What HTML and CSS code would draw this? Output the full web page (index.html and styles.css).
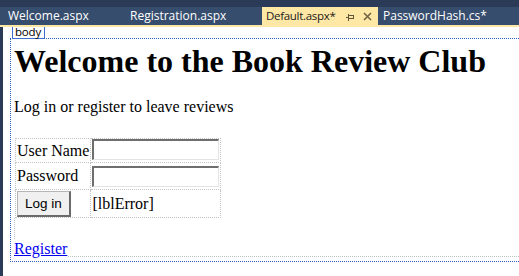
FILE: index.html
```html
<!DOCTYPE html>
<html>
<head>
<meta charset="utf-8">
<link rel="stylesheet" href="styles.css">
</head>
<body>
<div class="tabs">
  <div class="tab-band"></div>
  <div class="tab-row">
    <div class="tab tab-1">Welcome.aspx</div>
    <div class="tab tab-2">Registration.aspx</div>
    <div class="tab tab-active">
      <span class="tab-title">Default.aspx*</span>
      <svg class="pin" width="9" height="8" viewBox="0 0 9 8" shape-rendering="crispEdges">
        <rect x="0" y="4" width="2" height="1" fill="#5e5536"/>
        <rect x="2" y="1" width="1" height="7" fill="#5e5536"/>
        <rect x="3" y="2" width="5" height="1" fill="#5e5536"/>
        <rect x="3" y="5" width="5" height="1" fill="#5e5536"/>
        <rect x="7" y="2" width="1" height="4" fill="#5e5536"/>
      </svg>
      <svg class="close" width="9" height="9" viewBox="0 0 9 9">
        <path d="M1 1 L8 8 M8 1 L1 8" stroke="#6f6546" stroke-width="1.6" fill="none"/>
      </svg>
    </div>
    <div class="tab tab-4">PasswordHash.cs*</div>
  </div>
  <div class="tab-line"></div>
</div>
<div class="editor">
  <div class="gutter"></div>
  <div class="canvas">
    <div class="surface">
      <span class="tag">body</span>
      <h1 class="title">Welcome to the Book Review Club</h1>
      <p class="intro">Log in or register to leave reviews</p>
      <table class="login">
        <tr class="row-1">
          <td class="label">User Name</td>
          <td class="field"><span class="textbox"></span></td>
        </tr>
        <tr class="row-2">
          <td class="label">Password</td>
          <td class="field"><span class="textbox"></span></td>
        </tr>
        <tr class="row-3">
          <td class="label"><button class="btn" type="button">Log in</button></td>
          <td class="field msg">[lblError]</td>
        </tr>
      </table>
      <div class="reg-block"><a class="reg-link" href="#">Register</a></div>
    </div>
  </div>
</div>
</body>
</html>
```

FILE: styles.css
```css
html, body {
  margin: 0;
  padding: 0;
  background: #ffffff;
  overflow: hidden;
}
body {
  width: 519px;
  height: 276px;
  display: flex;
  flex-direction: column;
  font-family: "Liberation Serif", "Times New Roman", serif;
}
.tabs {
  display: flex;
  flex-direction: column;
  flex: none;
}
.tab-band {
  height: 7px;
  background: #2b3a57;
}
.tab-row {
  height: 18px;
  display: flex;
  background: #364d6e;
  font-family: "Open Sans", "Noto Sans", sans-serif;
  font-size: 12px;
  line-height: 18px;
  color: #ffffff;
  white-space: nowrap;
}
.tab {
  flex: none;
  box-sizing: border-box;
  overflow: hidden;
}
.tab-1 { width: 122px; padding-left: 8px; }
.tab-2 { width: 140px; padding-left: 8px; }
.tab-active {
  width: 116px;
  padding-left: 4px;
  background: #ffe8a6;
  color: #1a1a1a;
  display: flex;
  align-items: center;
}
.tab-title { width: 79px; flex: none; font-size: 11.5px; letter-spacing: -0.3px; }
.pin { flex: none; margin-top: 1px; margin-left: 1px; }
.close { flex: none; margin-left: 8px; margin-top: 0; }
.tab-4 { flex: 1; padding-left: 5px; }
.tab-line {
  height: 2px;
  background: #ffe8a6;
}
.editor {
  flex: 1;
  display: flex;
}
.gutter {
  width: 3px;
  flex: none;
  background: #2b3a57;
}
.canvas {
  flex: 1;
  background: #ffffff;
  padding-top: 11px;
  padding-left: 7px;
}
.surface {
  position: relative;
  border-top: 1px dotted #2f5fbf;
  border-left: 1px dotted #2f5fbf;
  border-bottom: 1px dotted #2f5fbf;
  padding: 0 0 4px 3px;
  color: #000;
}
.tag {
  position: absolute;
  left: 1px;
  top: -12px;
  height: 11px;
  box-sizing: content-box;
  padding: 0 2px 0 2px;
  width: 27px;
  border: 1px solid #3c6fcf;
  border-top: 0;
  background: #fff;
  font-family: "Open Sans", "Noto Sans", sans-serif;
  font-size: 11.5px;
  line-height: 10px;
  letter-spacing: -0.2px;
  color: #000;
}
.title {
  margin: 4px 0 0 0;
  font-size: 32px;
  line-height: 37px;
  font-weight: bold;
}
.intro {
  margin: 18px 0 0 0;
  font-size: 16px;
  line-height: 18px;
}
.login {
  margin: 22px 0 0 1px;
  border-collapse: collapse;
  font-size: 16px;
  line-height: 18px;
}
.login td {
  border: 1px dotted #c4c4c4;
  padding: 0 1px;
  vertical-align: middle;
  white-space: nowrap;
}
.label { width: 71px; }
.field { width: 127px; }
.row-1 td { height: 23px; }
.row-2 td { height: 26px; }
.row-3 td { height: 27px; }
.row-1 .field { vertical-align: top; }
.row-2 .field { vertical-align: middle; }
.textbox {
  display: block;
  box-sizing: border-box;
  width: 127px;
  height: 21px;
  border-top: 2px solid #6e6e6e;
  border-left: 2px solid #6e6e6e;
  border-right: 1px solid #e3e3e3;
  border-bottom: 1px solid #e3e3e3;
  background: #fff;
}
.btn {
  display: block;
  box-sizing: border-box;
  width: 54px;
  height: 26px;
  margin: 1px 0 0 0;
  padding: 0;
  background: #f0f0f0;
  border-top: 1px solid #b4b4b4;
  border-left: 1px solid #b4b4b4;
  border-right: 2px solid #6a6a6a;
  border-bottom: 2px solid #6a6a6a;
  border-radius: 0;
  font-family: "Liberation Sans", Arial, sans-serif;
  font-size: 13.5px;
  color: #000;
}
.msg { padding-left: 1px; }
.reg-block {
  height: 39px;
  box-sizing: border-box;
  padding-top: 21px;
  border-left: 1px dotted #c4c4c4;
  border-bottom: 1px dotted #c4c4c4;
}
.reg-link {
  display: inline-block;
  margin-left: -1px;
  padding-right: 1px;
  background: #fff;
  color: #0000ee;
  font-size: 16px;
  line-height: 18px;
  text-decoration: underline;
  position: relative;
  top: 1px;
}
```
